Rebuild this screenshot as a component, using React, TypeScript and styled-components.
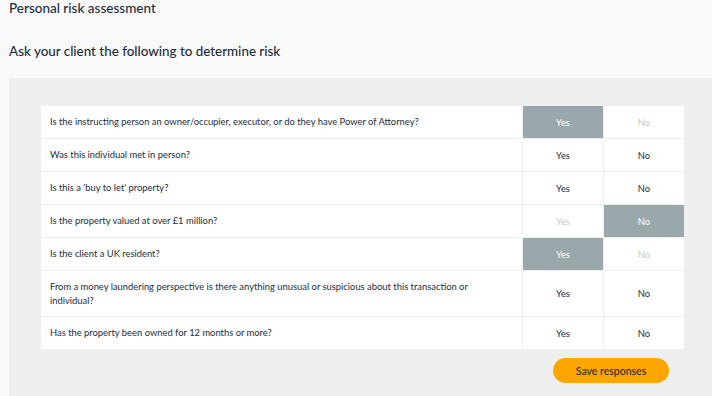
import React, { useState } from "react";
import styled, { createGlobalStyle } from "styled-components";

const Global = createGlobalStyle`
  html, body { margin: 0; padding: 0; background: #fafafa; }
  body { font-family: Lato, "Open Sans", sans-serif; color: #1c2d3b; }
  * { box-sizing: border-box; }
`;

const Page = styled.div`
  width: 712px;
  height: 396px;
  overflow: hidden;
  padding-left: 9px;
  display: flex;
  flex-direction: column;
`;

const Title = styled.h1`
  margin: 0;
  font-size: 13.5px;
  font-weight: 500;
  line-height: 16px;
  height: 42px;
`;

const Subtitle = styled.h2`
  margin: 0;
  font-size: 13.4px;
  font-weight: 500;
  line-height: 18px;
  height: 36px;
`;

const Panel = styled.div`
  flex: 1;
  background: #eef0f0;
  padding: 28px 30px 0 32px;
  display: flex;
  flex-direction: column;
`;

const Table = styled.div`
  width: 641px;
  display: flex;
  flex-direction: column;
  gap: 1px;
`;

const Row = styled.div<{ $tall?: boolean }>`
  display: grid;
  grid-template-columns: 481px 80px 80px;
  column-gap: 1px;
  height: ${(p) => (p.$tall ? "45px" : "32px")};
`;

const Question = styled.div`
  background: #fff;
  display: flex;
  align-items: center;
  padding: 0 9px;
  font-size: 9.4px;
  line-height: 14px;
`;

const Choice = styled.div<{ $state: "on" | "off" | "none" }>`
  background: ${(p) => (p.$state === "on" ? "#9aa8ab" : "#fff")};
  color: ${(p) =>
    p.$state === "on" ? "#ffffff" : p.$state === "off" ? "#c3c9cb" : "#1c2d3b"};
  display: flex;
  align-items: center;
  justify-content: center;
  font-size: 9.4px;
  cursor: pointer;
`;

const Footer = styled.div`
  width: 641px;
  display: flex;
  justify-content: flex-end;
  padding: 9px 13px 0 0;
`;

const SaveButton = styled.button`
  width: 116px;
  height: 25px;
  border: none;
  border-radius: 13px;
  background: #ffa500;
  color: #1c2d3b;
  font-family: Lato, "Open Sans", sans-serif;
  font-size: 10.5px;
  font-weight: 500;
  cursor: pointer;
`;

type Answer = "yes" | "no" | null;

const questions: { text: string; tall?: boolean; answer: Answer }[] = [
  {
    text: "Is the instructing person an owner/occupier, executor, or do they have Power of Attorney?",
    answer: "yes",
  },
  { text: "Was this individual met in person?", answer: null },
  { text: "Is this a 'buy to let' property?", answer: null },
  { text: "Is the property valued at over £1 million?", answer: "no" },
  { text: "Is the client a UK resident?", answer: "yes" },
  {
    text: "From a money laundering perspective is there anything unusual or suspicious about this transaction or individual?",
    tall: true,
    answer: null,
  },
  { text: "Has the property been owned for 12 months or more?", answer: null },
];

const stateFor = (answer: Answer, me: "yes" | "no") =>
  answer === null ? "none" : answer === me ? "on" : "off";

export default function App() {
  const [answers, setAnswers] = useState<Answer[]>(questions.map((q) => q.answer));
  const set = (i: number, v: Answer) =>
    setAnswers((a) => a.map((x, j) => (j === i ? v : x)));

  return (
    <>
      <Global />
      <Page>
        <Title>Personal risk assessment</Title>
        <Subtitle>Ask your client the following to determine risk</Subtitle>
        <Panel>
          <Table>
            {questions.map((q, i) => (
              <Row key={i} $tall={q.tall}>
                <Question>{q.text}</Question>
                <Choice $state={stateFor(answers[i], "yes")} onClick={() => set(i, "yes")}>
                  Yes
                </Choice>
                <Choice $state={stateFor(answers[i], "no")} onClick={() => set(i, "no")}>
                  No
                </Choice>
              </Row>
            ))}
          </Table>
          <Footer>
            <SaveButton>Save responses</SaveButton>
          </Footer>
        </Panel>
      </Page>
    </>
  );
}
